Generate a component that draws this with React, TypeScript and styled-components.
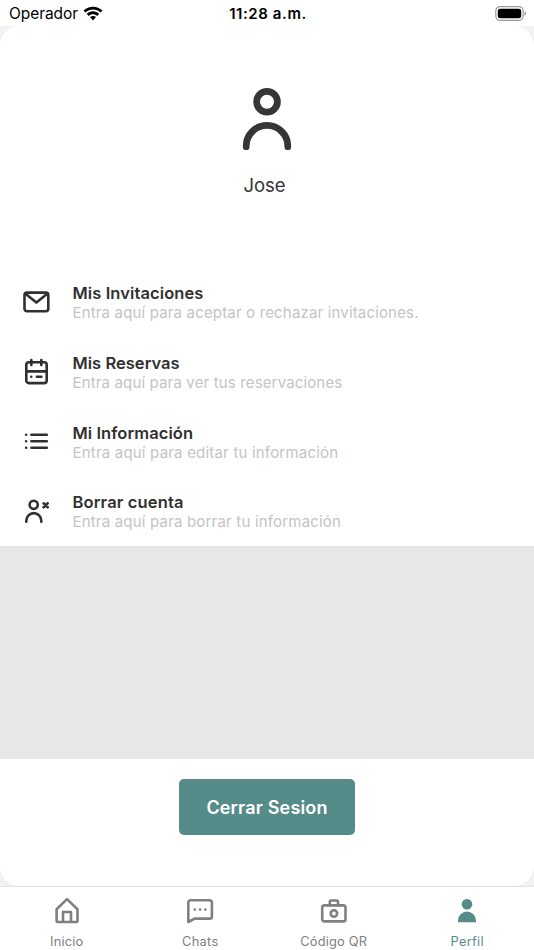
import React from "react";
import styled, { createGlobalStyle } from "styled-components";

const GlobalStyle = createGlobalStyle`
  * { box-sizing: border-box; }
  html, body { margin: 0; padding: 0; overflow: hidden; }
  body { font-family: Inter, "Liberation Sans", sans-serif; background: #fff; }
`;

const Screen = styled.div`
  width: 534px;
  height: 950px;
  display: flex;
  flex-direction: column;
  background: #f2f2f2;
  overflow: hidden;
`;

const StatusBar = styled.header`
  flex: none;
  height: 26px;
  padding: 0 7px 0 9px;
  display: grid;
  grid-template-columns: 1fr auto 1fr;
  align-items: center;
  background: #fff;
  color: #000;
`;

const Carrier = styled.div`
  display: flex;
  align-items: center;
  gap: 5px;
  height: 26px;
  font-size: 15.5px;
  line-height: 28px;
  letter-spacing: -0.06px;
  svg { margin-top: -1px; }
`;

const Clock = styled.time`
  font-size: 15px;
  font-weight: 600;
  line-height: 26px;
  letter-spacing: 0.58px;
  padding-top: 1px;
`;

const BatterySlot = styled.div`
  display: flex;
  justify-content: flex-end;
`;

const Card = styled.main`
  flex: none;
  height: 860px;
  display: flex;
  flex-direction: column;
  background: #fff;
  border-radius: 20px;
  overflow: hidden;
`;

const Profile = styled.section`
  flex: none;
  height: 241px;
  padding-top: 60px;
  display: flex;
  flex-direction: column;
  align-items: center;
`;

const Name = styled.h1`
  margin: 22px 5px 0 0;
  font-size: 18.5px;
  font-weight: 400;
  line-height: 26px;
  letter-spacing: -0.1px;
  color: #333;
`;

const Menu = styled.ul`
  flex: none;
  margin: 0;
  padding: 0;
  list-style: none;
`;

const MenuItem = styled.li`
  height: 69.67px;
  padding-left: 22px;
  display: flex;
  align-items: center;
  gap: 20.5px;
`;

const MenuText = styled.div`
  padding-top: 2px;
`;

const MenuTitle = styled.div<{ $spacing: number }>`
  font-size: 16.5px;
  font-weight: 600;
  line-height: 20px;
  letter-spacing: ${(p) => p.$spacing}px;
  color: #303030;
`;

const MenuHint = styled.div<{ $spacing: number }>`
  font-size: 15px;
  line-height: 19px;
  letter-spacing: ${(p) => p.$spacing}px;
  white-space: nowrap;
  color: #c4c4c4;
`;

const Spacer = styled.div`
  flex: none;
  height: 213px;
  background: #e7e7e7;
`;

const Actions = styled.div`
  flex: 1;
  padding-top: 20.8px;
  display: flex;
  justify-content: center;
  align-items: flex-start;
`;

const LogoutButton = styled.button`
  width: 176px;
  height: 55.5px;
  padding: 0;
  border: 0;
  border-radius: 5px;
  background: #558c89;
  color: #fff;
  font-family: inherit;
  font-size: 18px;
  font-weight: 600;
  letter-spacing: 0.16px;
`;

const TabBar = styled.nav`
  flex: 1;
  display: grid;
  grid-template-columns: repeat(4, 1fr);
  border-top: 1px solid #e4e4e4;
  background: #fff;
`;

const Tab = styled.a<{ $active?: boolean }>`
  display: flex;
  flex-direction: column;
  align-items: center;
  padding-top: 9px;
  color: ${(p) => (p.$active ? "#558c89" : "#808080")};
`;

const TabLabel = styled.span<{ $spacing: number }>`
  margin-top: 7px;
  font-size: 12.8px;
  line-height: 17px;
  letter-spacing: ${(p) => p.$spacing}px;
`;

const Glyph = styled.svg`
  flex: none;
  display: block;
  width: 30px;
  height: 30px;
  fill: none;
  stroke: currentColor;
  stroke-width: 2.6;
  stroke-linecap: round;
  stroke-linejoin: round;
`;

const MenuGlyph = styled(Glyph)`
  color: #303030;
`;

const WifiIcon = () => (
  <svg width="20" height="15" viewBox="0 0 20 15" fill="#000">
    <path d="M0.5 4.6C5.6-.55 14.4-.55 19.5 4.6L17.5 6.6C13.4 2.6 6.6 2.6 2.5 6.6Z" />
    <path d="M3.7 7.8C7.1 4.4 12.9 4.4 16.3 7.8L14.2 9.9C11.9 7.7 8.1 7.7 5.8 9.9Z" />
    <path d="M7 11.1C8.6 9.6 11.4 9.6 13 11.1L10 14.4Z" />
  </svg>
);

const BatteryIcon = () => (
  <svg width="32" height="15" viewBox="0 0 32 15">
    <rect x="0.8" y="0.7" width="27.4" height="13.6" rx="4.2" fill="none" stroke="#999" strokeWidth="1.2" />
    <rect x="2.8" y="2.7" width="23.4" height="9.6" rx="2.4" fill="#000" />
    <path d="M29.6 5v5c1.9-.7 1.9-4.3 0-5Z" fill="#999" />
  </svg>
);

const AvatarIcon = () => (
  <svg width="50" height="64" viewBox="0 0 50 64" fill="none" stroke="#363636" strokeWidth="6.8" strokeLinecap="round">
    <circle cx="25" cy="15.7" r="10.4" />
    <path d="M4.2 60.8V60.2a20.8 20.8 0 0 1 41.6 0V60.8" />
  </svg>
);

const MailIcon = () => (
  <MenuGlyph viewBox="0 0 30 30">
    <rect x="2.5" y="5.6" width="23.8" height="18.6" rx="2.4" />
    <path d="M3.2 6.6 14.4 15.6 25.6 6.6" />
  </MenuGlyph>
);

const CalendarIcon = () => (
  <MenuGlyph viewBox="0 0 30 30">
    <rect x="4.3" y="6.3" width="20.4" height="20.8" rx="2.6" />
    <path d="M4.3 15.4h20.4M9.3 4.1v4.8M19.3 4.1v4.8M14.9 20.7h4.5M9.3 20.7v.01" />
  </MenuGlyph>
);

const ListIcon = () => (
  <MenuGlyph viewBox="0 0 30 30">
    <path d="M9.4 8.7h15.4M9.4 15.2h15.4M9.4 21.7h15.4M4.1 8.7v.01M4.1 15.2v.01M4.1 21.7v.01" />
  </MenuGlyph>
);

const RemoveUserIcon = () => (
  <MenuGlyph viewBox="0 0 30 30">
    <circle cx="11.7" cy="8.8" r="4.1" />
    <path d="M4.3 25.8v-1.2a7.5 7.5 0 0 1 15 0v1.2M21.6 7.3l4.1 4M25.7 7.3l-4.1 4" />
  </MenuGlyph>
);

const HomeIcon = () => (
  <Glyph viewBox="0 0 30 30">
    <path d="M15 3.1 4.6 13.2V24.4a1.6 1.6 0 0 0 1.6 1.6h17.7a1.6 1.6 0 0 0 1.6-1.6V13.2Z" />
    <path d="M11 25.8V16h8v9.8" />
  </Glyph>
);

const ChatIcon = () => (
  <Glyph viewBox="0 0 30 30">
    <path d="M3.3 26V6.4a2.2 2.2 0 0 1 2.2-2.2h19.2a2.2 2.2 0 0 1 2.2 2.2v14a2.2 2.2 0 0 1-2.2 2.2H9.6Z" />
    <path d="M9.8 13.6v.01M15.1 13.6v.01M20.4 13.6v.01" />
  </Glyph>
);

const CameraIcon = () => (
  <Glyph viewBox="0 0 30 30">
    <rect x="3.2" y="9.4" width="23.3" height="16" rx="2.2" />
    <path d="M10.8 9.4V5.8a1.3 1.3 0 0 1 1.3-1.3h5.6a1.3 1.3 0 0 1 1.3 1.3v3.6" />
    <circle cx="14.9" cy="17.5" r="3.2" />
  </Glyph>
);

const PersonIcon = () => (
  <Glyph viewBox="0 0 30 30">
    <circle cx="15" cy="8.2" r="5.3" fill="currentColor" stroke="none" />
    <path d="M6 26.2v-1.7a9 8.9 0 0 1 18 0v1.7Z" fill="currentColor" stroke="none" />
  </Glyph>
);

const menu = [
  { icon: <MailIcon />, title: "Mis Invitaciones", hint: "Entra aquí para aceptar o rechazar invitaciones.", ts: 0.1, hs: 0.165 },
  { icon: <CalendarIcon />, title: "Mis Reservas", hint: "Entra aquí para ver tus reservaciones", ts: 0.03, hs: 0.15 },
  { icon: <ListIcon />, title: "Mi Información", hint: "Entra aquí para editar tu información", ts: 0.08, hs: 0.2 },
  { icon: <RemoveUserIcon />, title: "Borrar cuenta", hint: "Entra aquí para borrar tu información", ts: 0.16, hs: 0.19 },
];

const tabs = [
  { icon: <HomeIcon />, label: "Inicio", spacing: 0.2 },
  { icon: <ChatIcon />, label: "Chats", spacing: 0.3 },
  { icon: <CameraIcon />, label: "Código QR", spacing: 0.22 },
  { icon: <PersonIcon />, label: "Perfil", spacing: 0.3, active: true },
];

export default function App() {
  return (
    <>
      <GlobalStyle />
      <Screen>
        <StatusBar>
          <Carrier>
            Operador
            <WifiIcon />
          </Carrier>
          <Clock>11:28 a.m.</Clock>
          <BatterySlot>
            <BatteryIcon />
          </BatterySlot>
        </StatusBar>
        <Card>
          <Profile>
            <AvatarIcon />
            <Name>Jose</Name>
          </Profile>
          <Menu>
            {menu.map((item) => (
              <MenuItem key={item.title}>
                {item.icon}
                <MenuText>
                  <MenuTitle $spacing={item.ts}>{item.title}</MenuTitle>
                  <MenuHint $spacing={item.hs}>{item.hint}</MenuHint>
                </MenuText>
              </MenuItem>
            ))}
          </Menu>
          <Spacer />
          <Actions>
            <LogoutButton>Cerrar Sesion</LogoutButton>
          </Actions>
        </Card>
        <TabBar>
          {tabs.map((tab) => (
            <Tab key={tab.label} $active={tab.active}>
              {tab.icon}
              <TabLabel $spacing={tab.spacing}>{tab.label}</TabLabel>
            </Tab>
          ))}
        </TabBar>
      </Screen>
    </>
  );
}
